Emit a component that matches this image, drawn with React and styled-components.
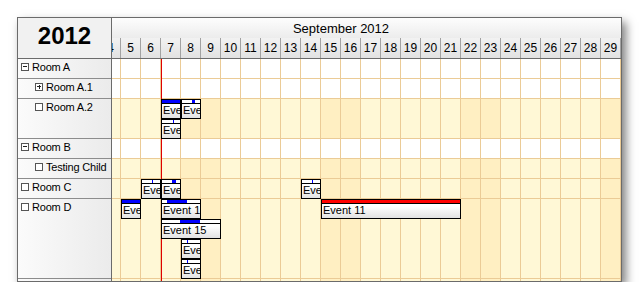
import React from "react";
import styled, { createGlobalStyle } from "styled-components";

const GlobalStyle = createGlobalStyle`
  html, body {
    margin: 0;
    padding: 0;
    background: #fff;
  }
  body {
    font-family: "Liberation Sans", Arial, sans-serif;
  }
`;

const DAY_W = 20;
const DAYS = 30;
const SCROLL = 71;
const WEEKENDS = [1, 2, 8, 9, 15, 16, 22, 23, 29, 30];

const rows = [
  { name: "Room A", level: 0, icon: "minus", height: 20, parent: true },
  { name: "Room A.1", level: 1, icon: "plus", height: 20, parent: true },
  {
    name: "Room A.2",
    level: 1,
    icon: "none",
    height: 40,
    events: [
      { day: 7, days: 1, lane: 0, text: "Event 3", bar: [0, 20] },
      { day: 8, days: 1, lane: 0, text: "Event 4", bar: [11, 14] },
      { day: 7, days: 1, lane: 1, text: "Event 5", bar: [12, 13] },
    ],
  },
  { name: "Room B", level: 0, icon: "minus", height: 20, parent: true },
  { name: "Testing Child", level: 1, icon: "none", height: 20 },
  {
    name: "Room C",
    level: 0,
    icon: "none",
    height: 20,
    events: [
      { day: 6, days: 1, lane: 0, text: "Event 6", bar: [11, 12] },
      { day: 7, days: 1, lane: 0, text: "Event 7", bar: [11, 15] },
      { day: 14, days: 1, lane: 0, text: "Event 8", bar: [11, 12] },
    ],
  },
  {
    name: "Room D",
    level: 0,
    icon: "none",
    height: 80,
    events: [
      { day: 5, days: 1, lane: 0, text: "Event 9", bar: [0, 20] },
      { day: 7, days: 2, lane: 0, text: "Event 1", bar: [6, 26] },
      { day: 7, days: 3, lane: 1, text: "Event 15", bar: [19, 39] },
      { day: 8, days: 1, lane: 2, text: "Event 2", bar: [6, 7] },
      { day: 8, days: 1, lane: 3, text: "Event 12", bar: [6, 7] },
      { day: 15, days: 7, lane: 0, text: "Event 11", bar: [0, 140], color: "#f00" },
    ],
  },
  { name: "", level: 0, icon: "none", height: 20 },
];

const Page = styled.div`
  padding: 17px 0 0 17px;
`;

const Scheduler = styled.div`
  width: 603px;
  height: 263px;
  border: 1px solid #6b6b6b;
  display: grid;
  grid-template-columns: 94px 509px;
  overflow: hidden;
  box-shadow: 4px 5px 9px rgba(0, 0, 0, 0.5);
  background: #fff;
`;

const LeftColumn = styled.div`
  display: flex;
  flex-direction: column;
  border-right: 1px solid #6b6b6b;
  background: linear-gradient(to right, #fbfbfb, #ebebeb);
`;

const Corner = styled.div`
  height: 41px;
  box-sizing: border-box;
  border-bottom: 1px solid #6b6b6b;
  display: flex;
  align-items: center;
  justify-content: center;
  padding-bottom: 4px;
  font-size: 24px;
  font-weight: bold;
  color: #000;
  background: #f1f1f1;
`;

const RowHeader = styled.div`
  height: ${(p) => p.$h}px;
  flex: none;
  box-sizing: border-box;
  border-bottom: 1px solid #8c8c8c;
  display: flex;
  align-items: flex-start;
  padding: 2px 0 0 ${(p) => 3 + p.$level * 14}px;
  font-size: 11px;
  line-height: 13px;
  letter-spacing: -0.2px;
  color: #000;
  white-space: nowrap;
`;

const ToggleBox = styled.span`
  width: 8px;
  height: 8px;
  box-sizing: border-box;
  border: 1px solid #555;
  background: #fff;
  margin: 2px 3px 0 0;
  flex: none;
  position: relative;

  &::before {
    content: "";
    display: ${(p) => (p.$icon === "none" ? "none" : "block")};
    position: absolute;
    left: 1px;
    top: 2px;
    width: 4px;
    height: 1px;
    background: #222;
  }

  &::after {
    content: "";
    display: ${(p) => (p.$icon === "plus" ? "block" : "none")};
    position: absolute;
    left: 2.5px;
    top: 0.5px;
    width: 1px;
    height: 4px;
    background: #222;
  }
`;

const Viewport = styled.div`
  overflow: hidden;
  display: flex;
  flex-direction: column;
`;

const Timeline = styled.div`
  width: ${DAYS * DAY_W}px;
  margin-left: -${SCROLL}px;
  display: flex;
  flex-direction: column;
`;

const MonthRow = styled.div`
  height: 20px;
  display: flex;
  align-items: center;
  justify-content: center;
  font-size: 13px;
  color: #000;
  background: linear-gradient(#fdfdfd, #ececec);
`;

const DayRow = styled.div`
  height: 21px;
  box-sizing: border-box;
  display: flex;
  border-bottom: 1px solid #6b6b6b;
  background: linear-gradient(#f2f2f2, #e2e2e2);
`;

const DayCell = styled.div`
  width: ${DAY_W}px;
  flex: none;
  box-sizing: border-box;
  border-right: 1px solid #a2a2a2;
  display: flex;
  align-items: center;
  justify-content: center;
  font-size: 12px;
  color: #000;
`;

const Grid = styled.div`
  position: relative;
  display: flex;
  flex-direction: column;
`;

const GridRow = styled.div`
  position: relative;
  height: ${(p) => p.$h}px;
  flex: none;
  display: flex;
`;

const Cell = styled.div`
  width: ${DAY_W}px;
  flex: none;
  box-sizing: border-box;
  border-right: 1px solid #ebcb96;
  border-bottom: 1px solid #ebcb96;
  background: ${(p) => (p.$parent ? "#fff" : p.$weekend ? "#ffefc2" : "#fff8d6")};
`;

const NowLine = styled.div`
  position: absolute;
  top: 0;
  bottom: 0;
  left: ${6 * DAY_W}px;
  width: 1px;
  background: #e00000;
  z-index: 1;
`;

const Event = styled.div`
  position: absolute;
  height: 20px;
  box-sizing: border-box;
  border: 1px solid #000;
  background: linear-gradient(#ffffff 35%, #e2e2e2);
  overflow: hidden;
  z-index: 2;
  display: flex;
  flex-direction: column;
`;

const EventBar = styled.div`
  height: 4px;
  flex: none;
  box-sizing: border-box;
  border-bottom: 1px solid #000;
  background: #fff;
  display: flex;
`;

const BarFill = styled.div`
  height: 3px;
  flex: none;
  background: ${(p) => p.$color};
`;

const EventText = styled.div`
  padding-left: 1px;
  font-size: 11px;
  line-height: 13px;
  color: #000;
  white-space: nowrap;
`;

function Toggle({ icon }) {
  return <ToggleBox $icon={icon} />;
}

export default function App() {
  const days = Array.from({ length: DAYS }, (_, i) => i + 1);
  return (
    <Page>
      <GlobalStyle />
      <Scheduler>
        <LeftColumn>
          <Corner>2012</Corner>
          {rows.map((r, i) => (
            <RowHeader key={i} $h={r.height} $level={r.level}>
              <Toggle icon={r.icon} />
              {r.name}
            </RowHeader>
          ))}
        </LeftColumn>
        <Viewport>
          <Timeline>
            <MonthRow>September 2012</MonthRow>
            <DayRow>
              {days.map((d) => (
                <DayCell key={d}>{d}</DayCell>
              ))}
            </DayRow>
            <Grid>
              <NowLine />
              {rows.map((r, i) => (
                <GridRow key={i} $h={r.height}>
                  {days.map((d) => (
                    <Cell key={d} $parent={r.parent} $weekend={WEEKENDS.includes(d)} />
                  ))}
                  {(r.events || []).map((e, j) => (
                    <Event
                      key={j}
                      style={{
                        left: (e.day - 1) * DAY_W,
                        top: e.lane * 20,
                        width: e.days * DAY_W,
                      }}
                    >
                      <EventBar>
                        <BarFill
                          $color={e.color || "#0000ff"}
                          style={{ marginLeft: Math.max(0, e.bar[0] - 1), width: e.bar[1] - e.bar[0] }}
                        />
                      </EventBar>
                      <EventText>{e.text}</EventText>
                    </Event>
                  ))}
                </GridRow>
              ))}
            </Grid>
          </Timeline>
        </Viewport>
      </Scheduler>
    </Page>
  );
}
